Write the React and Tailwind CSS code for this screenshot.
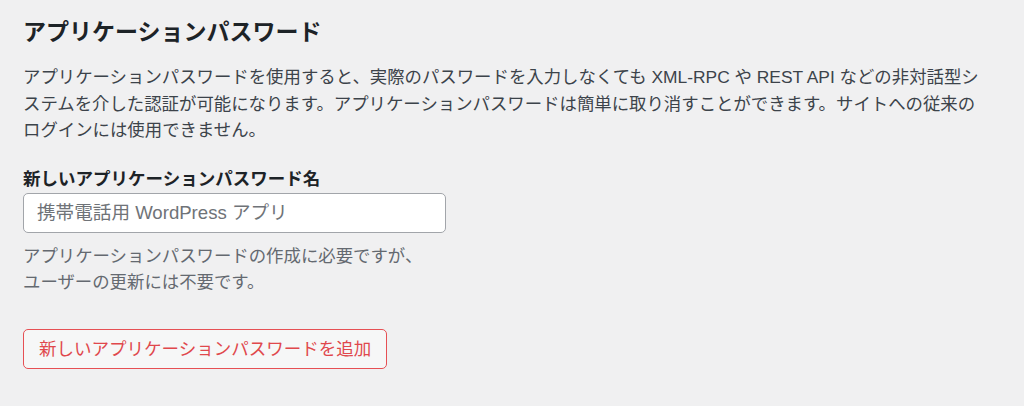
export default function App() {
  return (
    <div className="flex min-h-[406px] w-[1024px] flex-col items-start bg-[#f0f0f1] pl-[23px] pt-[15px] font-['Noto_Sans_CJK_JP','Noto_Sans',sans-serif]">
      <h2 className="text-[23px] leading-[30px] font-bold text-[#1d2327]">アプリケーションパスワード</h2>
      <p className="mt-[19px] whitespace-nowrap font-['Liberation_Sans','Noto_Sans_CJK_JP',sans-serif] text-[17.4px] leading-[26.5px] text-[#3c434a]">
        アプリケーションパスワードを使用すると、実際のパスワードを入力しなくても XML-RPC や REST API などの非対話型シ
        <br />
        ステムを介した認証が可能になります。アプリケーションパスワードは簡単に取り消すことができます。サイトへの従来の
        <br />
        ログインには使用できません。
      </p>
      <label className="mt-[21px] text-[17.5px] leading-[26px] font-bold text-[#1d2327]">新しいアプリケーションパスワード名</label>
      <input
        type="text"
        placeholder="携帯電話用 WordPress アプリ"
        className="mt-[2px] h-[40px] w-[423px] rounded-[5px] border-[1.5px] border-[#a2a5aa] bg-white px-[13px] font-['Liberation_Sans','Noto_Sans_CJK_JP',sans-serif] text-[18.6px] text-[#1d2327] outline-none placeholder:text-[#6f7378]"
      />
      <p className="mt-[9px] text-[17.4px] leading-[26.5px] text-[#646970]">
        アプリケーションパスワードの作成に必要ですが、
        <br />
        ユーザーの更新には不要です。
      </p>
      <button
        type="button"
        className="mt-[34px] h-[40px] rounded-[5px] border-[1.5px] border-[#e65054] bg-[#f6f7f7] px-[15px] font-['Noto_Sans_CJK_JP',sans-serif] text-[17.5px] text-[#e0484c]"
      >
        新しいアプリケーションパスワードを追加
      </button>
    </div>
  );
}
